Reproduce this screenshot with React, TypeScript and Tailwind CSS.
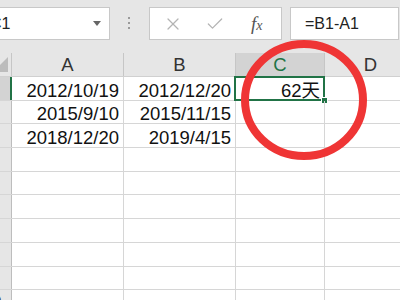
import React from "react";
import { X, Check } from "lucide-react";

// column widths in px: row header (mostly off-screen), A, B, C, D
const cols = [
  { key: "A", w: "w-[112px]" },
  { key: "B", w: "w-[112px]" },
  { key: "C", w: "w-[89px]" },
  { key: "D", w: "w-[92px]" },
];

const rowHeights = [
  "h-[24px]",
  "h-[23px]",
  "h-[24px]",
  "h-[24px]",
  "h-[23px]",
  "h-[24px]",
  "h-[24px]",
  "h-[24px]",
  "h-[23px]",
  "h-[24px]",
];

const data: Record<number, string[]> = {
  0: ["2012/10/19", "2012/12/20", "62天", ""],
  1: ["2015/9/10", "2015/11/15", "", ""],
  2: ["2018/12/20", "2019/4/15", "", ""],
};

const Toolbar = () => (
  <div className="h-[53px] bg-[#e6e6e6] flex items-start pt-[7px]">
    {/* name box */}
    <div className="-ml-[20px] w-[130px] h-[33px] bg-white border border-[#c8c8c8] flex items-center pl-[9px] pr-[8px]">
      <span className="text-[16px] text-[#222] leading-none">C1</span>
      <span className="ml-auto w-0 h-0 border-l-[4px] border-r-[4px] border-t-[5px] border-l-transparent border-r-transparent border-t-[#666]" />
    </div>
    {/* grip dots */}
    <div className="ml-[18px] mt-[10px] flex flex-col gap-[3px]">
      <span className="w-[2px] h-[2px] bg-[#9a9a9a]" />
      <span className="w-[2px] h-[2px] bg-[#9a9a9a]" />
      <span className="w-[2px] h-[2px] bg-[#9a9a9a]" />
    </div>
    {/* cancel / enter / fx */}
    <div className="ml-[19px] w-[133px] h-[33px] bg-white border border-[#c8c8c8] flex items-center pl-[13px]">
      <X size={20} strokeWidth={1.5} color="#b4b4b4" />
      <Check size={20} strokeWidth={1.5} color="#b4b4b4" className="ml-[22px]" />
      <span className="ml-[26px] text-[19px] italic text-[#555] font-['Liberation_Serif',serif] leading-none">
        f<span className="text-[14px]">x</span>
      </span>
    </div>
    {/* formula input */}
    <div className="ml-[8px] w-[109px] h-[33px] bg-white border border-[#c8c8c8] flex items-center pl-[14px]">
      <span className="text-[16px] text-[#222] leading-none">=B1-A1</span>
    </div>
  </div>
);

const HeaderRow = () => (
  <div className="flex h-[24px] bg-[#e6e6e6] border-b border-[#d0d0d0]">
    <div className="relative w-[40px] shrink-0 border-r border-[#c6c6c6]">
      <svg className="absolute right-[3px] bottom-[4px]" width="15" height="15" viewBox="0 0 15 15">
        <polygon points="15,0 15,15 0,15" fill="#bcbcbc" />
      </svg>
    </div>
    {cols.map((c) => (
      <div
        key={c.key}
        className={`${c.w} shrink-0 border-r border-[#c6c6c6] flex items-end justify-center pb-[2px] text-[18.5px] leading-[18px] ${
          c.key === "C" ? "bg-[#d3d3d3] text-[#217346]" : "text-[#333]"
        }`}
      >
        {c.key}
      </div>
    ))}
  </div>
);

const Row = ({ i }: { i: number }) => {
  const vals = data[i] ?? ["", "", "", ""];
  return (
    <div className={`flex ${rowHeights[i]} border-b border-[#d6d6d6]`}>
      <div
        className={`w-[40px] shrink-0 border-r border-[#bdbdbd] flex items-end justify-center pb-[2px] text-[18px] leading-[18px] text-[#444] ${
          i === 0 ? "bg-[#d3d3d3] border-r-2 border-r-[#217346]" : "bg-[#e6e6e6]"
        }`}
      >
        {i + 1}
      </div>
      {cols.map((c, j) => (
        <div
          key={c.key}
          className={`relative ${c.w} shrink-0 border-r border-[#d6d6d6] flex items-end justify-end pr-[4px] text-[18.5px] leading-[18px] text-[#111]`}
        >
          {vals[j]}
          {i === 0 && c.key === "C" && (
            <>
              <div className="absolute -left-[2px] -top-[1px] -right-[1px] -bottom-[1px] border-2 border-[#217346]" />
              <div className="absolute -right-[4px] -bottom-[4px] w-[7px] h-[7px] bg-[#217346] border border-white" />
            </>
          )}
        </div>
      ))}
    </div>
  );
};

export default function App() {
  return (
    <div className="relative w-[400px] h-[300px] overflow-hidden bg-white font-['Liberation_Sans',Arial,'Noto_Sans_CJK_SC',sans-serif]">
      <Toolbar />
      <div className="-ml-[28px]">
        <HeaderRow />
        {rowHeights.map((_, i) => (
          <Row key={i} i={i} />
        ))}
      </div>
      {/* red hand-drawn circle */}
      <svg className="absolute left-0 top-0 pointer-events-none" width="400" height="300">
        <ellipse cx="304" cy="100" rx="59" ry="56" fill="none" stroke="#ef3535" strokeWidth="8" />
      </svg>
    </div>
  );
}
